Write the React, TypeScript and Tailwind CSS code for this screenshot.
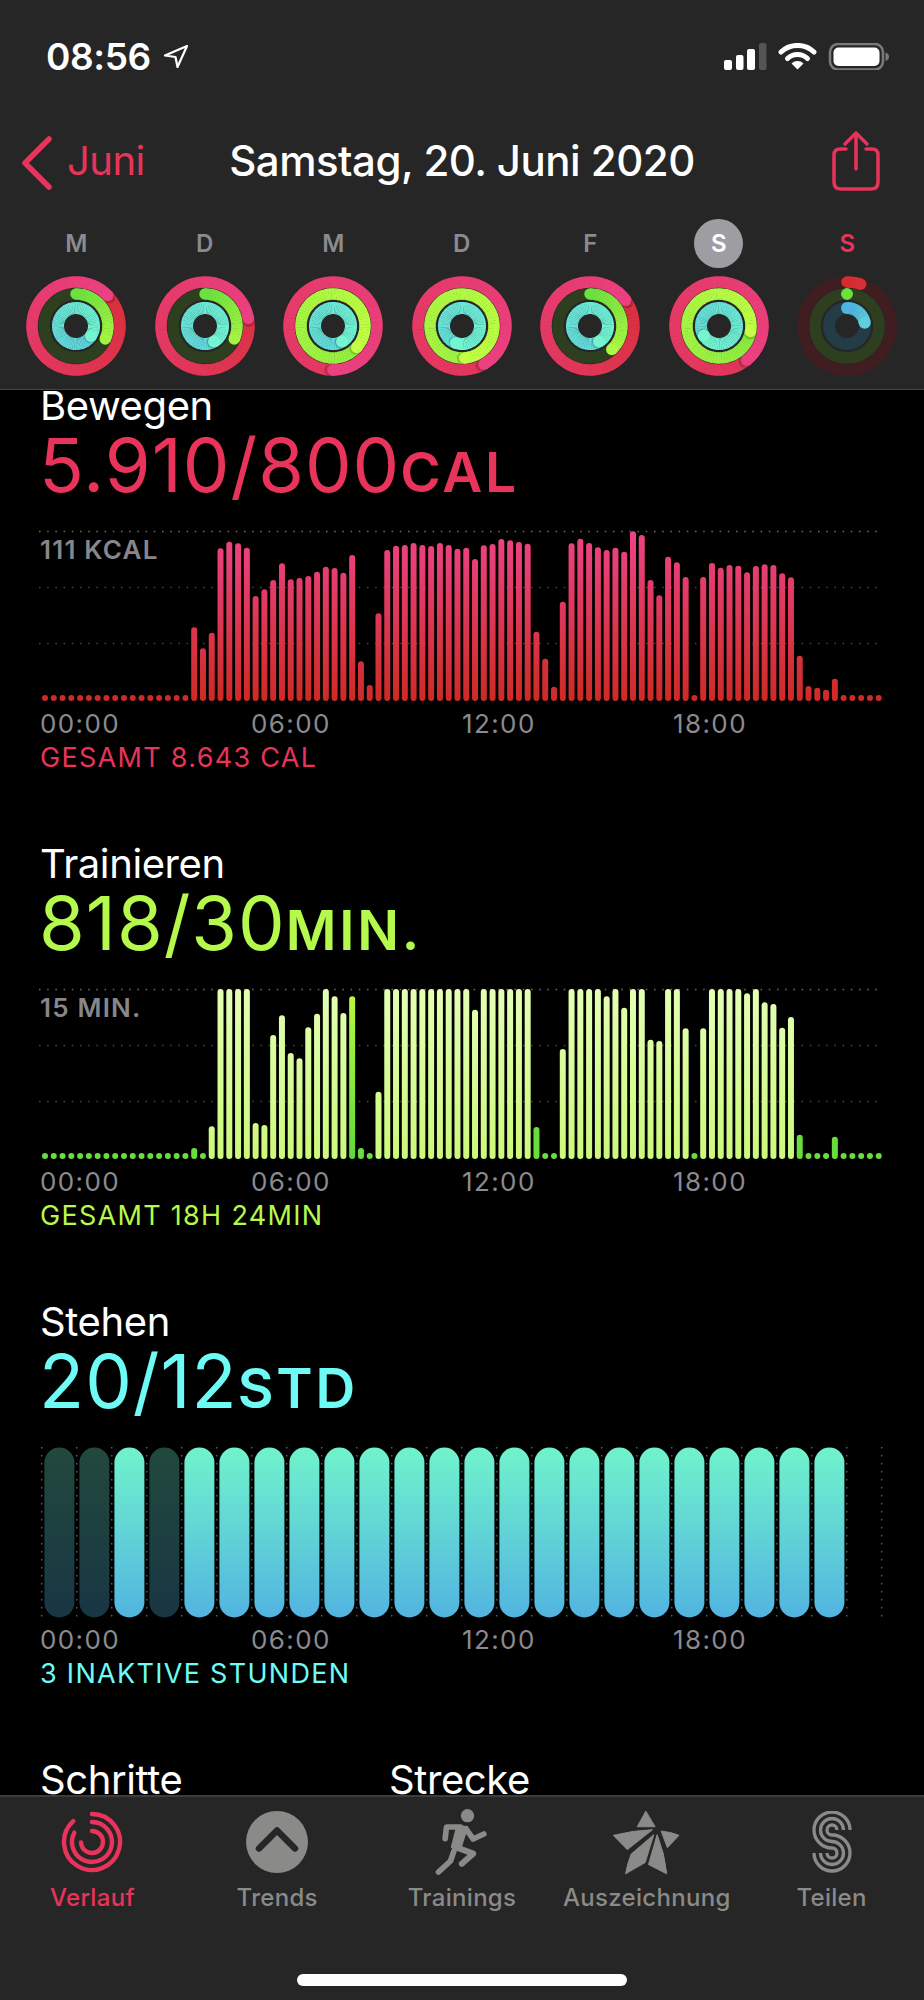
import React from 'react';

// bar tops as read off the screenshot at 3x, 0 means the bar is only a dot
const moveTops = [
  0, 0, 0, 0, 0, 0, 0, 0, 0, 0, 0, 0, 0, 0, 0, 0, 0,
  712, 775, 728, 475, 455, 460, 473, 618, 598, 570, 520, 568, 564, 558, 545, 530, 534, 548, 495, 814, 885, 670, 480, 467, 465, 459, 465, 468, 459, 465, 476,
  473, 507, 466, 462, 447, 451, 456, 461, 725, 806, 890, 635, 460, 446, 459, 472, 480, 473, 485, 424, 435, 570, 616, 500, 517, 561, 0, 561, 519, 533, 525, 527, 547, 528, 523, 525, 550, 562, 797, 888, 893, 899, 866, 0, 0, 0, 0, 0,
];
const exerciseTops = [
  0, 0, 0, 0, 0, 0, 0, 0, 0, 0, 0, 0, 0, 0, 0, 0, 0,
  925, 0, 860, 448, 448, 448, 448, 850, 856, 586, 527, 640, 656, 563, 522, 448, 470, 520, 470, 925, 0, 756, 448, 448, 448, 448, 448, 448, 448, 448, 448,
  448, 510, 448, 448, 448, 448, 448, 448, 862, 0, 0, 628, 448, 448, 448, 448, 470, 448, 504, 448, 448, 600, 604, 448, 448, 566, 0, 566, 448, 448, 448, 448, 461, 448, 488, 493, 564, 532, 885, 0, 0, 0, 891, 0, 0, 0, 0, 0,
];
const exerciseGreen = [17, 36, 56, 86, 90];
const inactiveHours = [0, 1, 3];

const days = [
  { label: 'M', move: 406, ex: 114, stand: 484 },
  { label: 'D', move: 440, ex: 114, stand: 510 },
  { label: 'M', move: 540, ex: 492, stand: 510 },
  { label: 'D', move: 510, ex: 535, stand: 560 },
  { label: 'F', move: 414, ex: 137, stand: 510 },
  { label: 'S', move: 501, ex: 460, stand: 598, selected: true },
  { label: 'S', move: 18, ex: 0, stand: 80, today: true },
];

const point = (cx: number, cy: number, r: number, deg: number) => {
  const a = ((deg - 90) * Math.PI) / 180;
  return [cx + r * Math.cos(a), cy + r * Math.sin(a)];
};

const arcPath = (cx: number, cy: number, r: number, from: number, to: number) => {
  const [x0, y0] = point(cx, cy, r, from);
  const [x1, y1] = point(cx, cy, r, to);
  return `M${x0} ${y0}A${r} ${r} 0 ${to - from > 180 ? 1 : 0} 1 ${x1} ${y1}`;
};

const mix = (a: number[], b: number[], t: number) => {
  const c = a.map((v, i) => Math.round(v + (b[i] - v) * t));
  return `rgb(${c[0]},${c[1]},${c[2]})`;
};

function RingArc({ r, w, sweep, from, to, track }: { r: number; w: number; sweep: number; from: number[]; to: number[]; track: string }) {
  const full = sweep >= 360;
  const start = full ? sweep - 360 : 0;
  const span = full ? 360 : sweep;
  const reach = Math.min(1, span / 180);
  // a ring past its goal has moved on along the gradient
  const t0 = full ? Math.min(0.6, (sweep - 360) / 300) : 0;
  const n = Math.max(1, Math.ceil(span / 5));
  const [ex, ey] = point(52, 52, r, sweep);
  const [sx, sy] = point(52, 52, r, start);
  const [shx, shy] = point(52, 52, r, sweep + 4);
  return (
    <g>
      <circle cx={52} cy={52} r={r} fill="none" stroke={track} strokeWidth={w} />
      {span > 0 && Array.from({ length: n }).map((_, i) => (
        <path
          key={i}
          d={arcPath(52, 52, r, start + (span * i) / n, start + (span * (i + 1)) / n + 0.6)}
          fill="none"
          stroke={mix(from, to, t0 + ((reach - t0) * (i + 0.5)) / n)}
          strokeWidth={w}
        />
      ))}
      {!full && <circle cx={sx} cy={sy} r={w / 2} fill={mix(from, to, 0)} />}
      {full && <circle cx={shx} cy={shy} r={w / 2} fill="#000" opacity={0.18} />}
      <circle cx={ex} cy={ey} r={w / 2} fill={mix(from, to, reach)} />
    </g>
  );
}

function Rings({ move, ex, stand }: { move: number; ex: number; stand: number }) {
  return (
    <svg width="104" height="104" viewBox="0 0 104 104" className="block">
      <RingArc r={44} w={11.5} sweep={move} from={[214, 44, 47]} to={[236, 64, 130]} track="#3f1d20" />
      <RingArc r={32} w={11.5} sweep={ex} from={[108, 224, 62]} to={[194, 255, 68]} track="#2d3f1f" />
      <RingArc r={18} w={12} sweep={stand} from={[79, 179, 227]} to={[114, 245, 208]} track="#233c45" />
    </svg>
  );
}

function GridLines() {
  return (
    <g strokeWidth="1.5">
      <line x1="39" x2="881" y1="6.5" y2="6.5" stroke="#6a6a6a" strokeDasharray="1.5 6.7" />
      <line x1="39" x2="881" y1="62.5" y2="62.5" stroke="#454545" strokeDasharray="1.5 6.7" />
      <line x1="39" x2="881" y1="118.5" y2="118.5" stroke="#454545" strokeDasharray="1.5 6.7" />
    </g>
  );
}

function MoveChart() {
  return (
    <svg width="924" height="184" viewBox="0 0 924 184" className="block">
      <defs>
        <linearGradient id="moveBar" gradientUnits="userSpaceOnUse" x1="0" y1="6" x2="0" y2="176">
          <stop offset="0" stopColor="#ee4488" />
          <stop offset="1" stopColor="#ce2a24" />
        </linearGradient>
      </defs>
      <GridLines />
      {moveTops.map((top, i) => {
        const y = top ? (top - 423) / 3 + 6 : 170;
        return <rect key={i} x={42 + i * 8.776} y={y} width="6" height={176 - y} rx="3" fill="url(#moveBar)" />;
      })}
    </svg>
  );
}

function ExerciseChart() {
  return (
    <svg width="924" height="184" viewBox="0 0 924 184" className="block">
      <defs>
        <linearGradient id="exBar" gradientUnits="userSpaceOnUse" x1="0" y1="6" x2="0" y2="176">
          <stop offset="0" stopColor="#e4ffb4" />
          <stop offset="1" stopColor="#cbf97a" />
        </linearGradient>
        <linearGradient id="exBarMid" gradientUnits="userSpaceOnUse" x1="0" y1="14" x2="0" y2="176">
          <stop offset="0" stopColor="#b8f840" />
          <stop offset="1" stopColor="#5fd838" />
        </linearGradient>
      </defs>
      <GridLines />
      {exerciseTops.map((top, i) => {
        const y = top ? (top - 448) / 3 + 6 : 170;
        const fill = i === 35 ? 'url(#exBarMid)' : !top || exerciseGreen.includes(i) ? '#69dd3e' : 'url(#exBar)';
        return <rect key={i} x={42 + i * 8.776} y={y} width="6" height={176 - y} rx="3" fill={fill} />;
      })}
    </svg>
  );
}

function StandChart() {
  return (
    <svg width="924" height="184" viewBox="0 0 924 184" className="block">
      <defs>
        <linearGradient id="standBar" gradientUnits="userSpaceOnUse" x1="0" y1="6" x2="0" y2="176">
          <stop offset="0" stopColor="#70f3cc" />
          <stop offset="1" stopColor="#52b4e0" />
        </linearGradient>
      </defs>
      {Array.from({ length: 25 }).map((_, i) => (
        <line key={i} x1={41.7 + i * 35} x2={41.7 + i * 35} y1="6" y2="176" stroke="#5c5c5c" strokeWidth="1.5" strokeDasharray="1.5 6.5" />
      ))}
      {Array.from({ length: 23 }).map((_, i) => (
        <rect
          key={i}
          x={44.4 + i * 35}
          y="6.5"
          width="30"
          height="170"
          rx="15"
          fill="url(#standBar)"
          opacity={inactiveHours.includes(i) ? 0.3 : 1}
        />
      ))}
    </svg>
  );
}

function Section({ title, value, unit, color, max, total, chart }: {
  title: string;
  value: string;
  unit: string;
  color: string;
  max?: string;
  total: string;
  chart: React.ReactNode;
}) {
  return (
    <section className="h-[458px] shrink-0">
      <h2 className="pl-[40px] text-[40px] leading-[31px] tracking-[-0.4px] text-white">{title}</h2>
      <div className={`mt-[8px] pl-[39px] text-[74px] leading-[72px] tracking-[1px] ${color}`}>
        {value}
        <span className="text-[55px] font-semibold tracking-[2.8px]">{unit}</span>
      </div>
      <div className="relative mt-[17px]">
        {chart}
        {max && <span className="absolute left-[40px] top-[10px] text-[26px] leading-[30px] font-semibold tracking-[1.2px] text-[#86868b]">{max}</span>}
      </div>
      <div className="ml-[40px] grid w-[844px] grid-cols-4 text-[26px] leading-[30px] tracking-[1.4px] text-[#8a8a8f]">
        <span>00:00</span>
        <span>06:00</span>
        <span>12:00</span>
        <span>18:00</span>
      </div>
      <div className={`mt-[4px] pl-[40px] text-[27px] leading-[30px] tracking-[1.3px] ${color}`}>{total}</div>
    </section>
  );
}

function StatusIcons() {
  return (
    <svg width="165" height="27" viewBox="0 0 165 27" className="block">
      <rect x="0" y="17" width="8" height="10" rx="2" fill="#fff" />
      <rect x="12" y="12" width="7.5" height="15" rx="2" fill="#fff" />
      <rect x="23" y="6" width="8" height="21" rx="2" fill="#fff" />
      <rect x="35" y="0" width="7.5" height="27" rx="2" fill="#555" />
      <path d="M57 9A24 24 0 0 1 90 9" fill="none" stroke="#fff" strokeWidth="5" strokeLinecap="round" />
      <path d="M63.5 15.5A14.5 14.5 0 0 1 83.5 15.5" fill="none" stroke="#fff" strokeWidth="5" strokeLinecap="round" />
      <path d="M73.5 26.5L67.5 20.5A8.5 8.5 0 0 1 79.5 20.5Z" fill="#fff" />
      <rect x="106" y="1" width="53" height="25.5" rx="8" fill="none" stroke="#7a7a7a" strokeWidth="2.5" />
      <rect x="109.5" y="4.5" width="46" height="18.5" rx="5" fill="#fff" />
      <path d="M161.5 9.5C164 10.5 165 12 165 13.75C165 15.5 164 17 161.5 18Z" fill="#7a7a7a" />
    </svg>
  );
}

function VerlaufIcon() {
  return (
    <svg width="64" height="64" viewBox="0 0 64 64" fill="none" stroke="#e8335a" strokeWidth="4.4" strokeLinecap="round">
      <path d={arcPath(32, 32, 28, 0, 318)} />
      <path d={arcPath(32, 32, 20, 0, 298)} />
      <path d={arcPath(32, 32, 11, 0, 268)} />
    </svg>
  );
}

function TrendsIcon() {
  return (
    <svg width="62" height="62" viewBox="0 0 62 62">
      <circle cx="31" cy="31" r="31" fill="#8a8a88" />
      <path d="M13 37.5L31 19.5L49 37.5" fill="none" stroke="#262626" strokeWidth="6.5" strokeLinecap="round" strokeLinejoin="round" />
    </svg>
  );
}

function RunnerIcon() {
  return (
    <svg width="57" height="70" viewBox="40 20 170 210" fill="none" stroke="#8a8a88" strokeLinecap="round" strokeLinejoin="round">
      <circle cx="143" cy="46" r="20" fill="#8a8a88" stroke="none" />
      <path d="M122 80L80 80L76 115" strokeWidth="17" />
      <path d="M112 78L142 80L120 150L96 140Z" fill="#8a8a88" strokeWidth="6" />
      <path d="M138 85L160 116L192 101" strokeWidth="17" />
      <path d="M112 142L160 160L126 190" strokeWidth="18" />
      <path d="M103 150L92 182L56 215" strokeWidth="17" />
    </svg>
  );
}

function StarIcon() {
  return (
    <svg width="73" height="70" viewBox="570 25 220 210" fill="#8a8a88" stroke="#8a8a88" strokeWidth="3" strokeLinejoin="round">
      <path d="M678 37L706 84L652 84Z" />
      <path d="M580 110Q640 95 698 93L622 153Z" />
      <path d="M724 97Q755 100 778 110L743 147Z" />
      <path d="M702 108L676 192L617 226Q622 195 634 166Z" />
      <path d="M712 108Q735 165 741 226L686 198Z" />
    </svg>
  );
}

function TeilenIcon() {
  return (
    <svg width="40" height="62" viewBox="0 0 40 62" fill="none" stroke="#8a8a88" strokeWidth="3.3">
      <path d="M38 19A18 18 0 1 0 20 37A5 5 0 1 1 15 42" />
      <path d="M31.5 19A11.5 11.5 0 1 0 20 30.5A11.5 11.5 0 1 1 8.5 42" />
      <path d="M25 19A5 5 0 1 0 20 24A18 18 0 1 1 2 42" />
    </svg>
  );
}

const tabs = [
  { label: 'Verlauf', icon: <VerlaufIcon />, active: true },
  { label: 'Trends', icon: <TrendsIcon /> },
  { label: 'Trainings', icon: <RunnerIcon /> },
  { label: 'Auszeichnung', icon: <StarIcon /> },
  { label: 'Teilen', icon: <TeilenIcon /> },
];

export default function App() {
  return (
    <div className="flex h-[2000px] w-[924px] flex-col overflow-hidden bg-black font-['Inter',sans-serif]">
      {/* Header */}
      <header className="h-[390px] shrink-0 border-b border-[#444] bg-[#262626] pt-[43px]">
        <div className="flex h-[27px] items-center justify-between pl-[46px] pr-[35px]">
          <div className="flex items-center gap-[12px]">
            <span className="text-[37px] leading-[27px] font-semibold tracking-[-0.4px] text-white">08:56</span>
            <svg width="26" height="25" viewBox="0 0 26 25" fill="none" stroke="#fff" strokeWidth="2.2" strokeLinejoin="round">
              <path d="M24 2L2 11.5L12.5 13L14.5 23Z" />
            </svg>
          </div>
          <StatusIcons />
        </div>

        <div className="mt-[63px] grid h-[60px] grid-cols-[1fr_auto_1fr] items-center">
          <div className="flex items-center gap-[14px] pl-[21px] text-[40px] text-[#e8335a]">
            <svg width="32" height="54" viewBox="0 0 32 54" fill="none" stroke="#e8335a" strokeWidth="5.5" strokeLinecap="round" strokeLinejoin="round">
              <path d="M28 3L4 27L28 51" />
            </svg>
            <span className="-mt-[5px] tracking-[-0.5px]">Juni</span>
          </div>
          <h1 className="-mt-[5px] text-[42px] font-medium tracking-[-0.5px] text-white">Samstag, 20. Juni 2020</h1>
          <div className="flex justify-end pr-[44px]">
            <svg width="48" height="60" viewBox="0 0 48 60" fill="none" stroke="#e8335a" strokeWidth="3.5" strokeLinecap="round" strokeLinejoin="round" className="-translate-y-[2px]">
              <path d="M14 18H8Q2 18 2 24V51Q2 58 9 58H39Q46 58 46 51V24Q46 18 40 18H34" />
              <path d="M24 38V3M13 13L24 2L35 13" />
            </svg>
          </div>
        </div>

        <div className="mt-[26px] grid grid-cols-[repeat(7,128.5px)] pl-[12px]">
          {days.map((d, i) => (
            <div key={i} className="flex flex-col items-center">
              <div
                className={`flex h-[49px] w-[49px] items-center justify-center rounded-full text-[24px] font-semibold ${
                  d.selected ? 'bg-[#9e9ea2] text-white' : d.today ? 'text-[#e8335a]' : 'text-[#8a8a8f]'
                }`}
              >
                {d.label}
              </div>
              <div className="mt-[6px]">
                <Rings move={d.move} ex={d.ex} stand={d.stand} />
              </div>
            </div>
          ))}
        </div>
      </header>

      {/* Summary */}
      <main className="min-h-0 flex-1 overflow-hidden">
        <Section title="Bewegen" value="5.910/800" unit="CAL" color="text-[#e8335a]" max="111 KCAL" total="GESAMT 8.643 CAL" chart={<MoveChart />} />
        <Section title="Trainieren" value="818/30" unit="MIN." color="text-[#b5f94c]" max="15 MIN." total="GESAMT 18H 24MIN" chart={<ExerciseChart />} />
        <Section title="Stehen" value="20/12" unit="STD" color="text-[#6ffbf5]" total="3 INAKTIVE STUNDEN" chart={<StandChart />} />
        <div className="flex pl-[40px] text-[40px] leading-[31px] tracking-[-0.4px] text-white">
          <span className="w-[349px]">Schritte</span>
          <span>Strecke</span>
        </div>
      </main>

      {/* Tab bar */}
      <nav className="h-[205px] shrink-0 border-t-2 border-[#3c3c3c] bg-[#262626] pt-[10px]">
        <div className="grid grid-cols-5">
          {tabs.map(t => (
            <div key={t.label} className="flex flex-col items-center">
              <div className="flex h-[70px] items-center justify-center">{t.icon}</div>
              <span className={`mt-[6px] text-[24px] leading-[30px] font-medium tracking-[0.3px] ${t.active ? 'text-[#e8335a]' : 'text-[#8a8a88]'}`}>{t.label}</span>
            </div>
          ))}
        </div>
        <div className="mx-auto mt-[61px] h-[12px] w-[330px] rounded-full bg-white" />
      </nav>
    </div>
  );
}
